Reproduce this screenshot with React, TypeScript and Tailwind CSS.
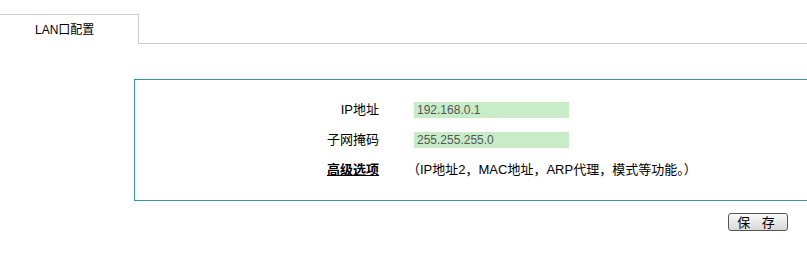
export default function App() {
  return (
    <div
      className="h-[255px] w-[807px] overflow-hidden bg-white text-[12px] text-black"
      style={{ fontFamily: '"Liberation Sans", "Noto Sans CJK SC", sans-serif' }}
    >
      {/* tab strip */}
      <div className="flex pt-[14px]">
        <div className="flex h-[30px] w-[139px] shrink-0 items-center border-t border-r border-[#cccccc] pl-[35px]">
          LAN口配置
        </div>
        <div className="flex-1 border-b border-[#cccccc]" />
      </div>

      {/* settings box */}
      <div className="ml-[134px] mt-[35px] w-[700px] border border-[#339a9a] py-[15px]">
        <div className="flex h-[30px] items-center">
          <div className="w-[244px] text-right text-[13px]">IP地址</div>
          <div className="ml-[35px] flex h-[16px] w-[155px] items-center bg-[#c8ecc8] pl-[3px] text-[#555555]">
            192.168.0.1
          </div>
        </div>
        <div className="flex h-[30px] items-center">
          <div className="w-[244px] text-right text-[13px]">子网掩码</div>
          <div className="ml-[35px] flex h-[16px] w-[155px] items-center bg-[#c8ecc8] pl-[3px] text-[#555555]">
            255.255.255.0
          </div>
        </div>
        <div className="flex h-[30px] items-center">
          <div className="w-[244px] text-right text-[13px] font-bold underline">高级选项</div>
          <div className="ml-[28px] text-[13px]">（IP地址2，MAC地址，ARP代理，模式等功能。）</div>
        </div>
      </div>

      <div className="mt-[12px] flex justify-end pr-[19px]">
        <button
          type="button"
          className="h-[18px] w-[60px] rounded-[3px] border border-[#555555] bg-gradient-to-b from-[#fafafa] to-[#d8d8d8] text-[13px] leading-none tracking-[4px]"
        >
          保 存
        </button>
      </div>
    </div>
  );
}
